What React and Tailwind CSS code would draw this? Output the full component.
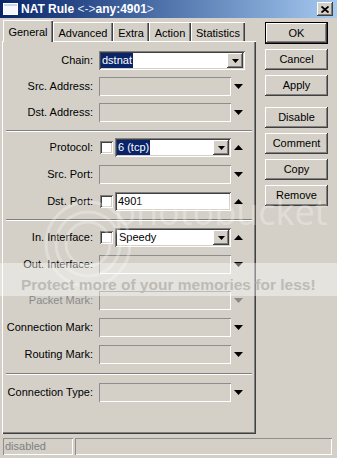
import React from "react";

const raised =
  "shadow-[inset_-1px_-1px_0_#404040,inset_1px_1px_0_#ffffff,inset_-2px_-2px_0_#808080]";
const sunken =
  "shadow-[inset_1px_1px_0_#808080,inset_-1px_-1px_0_#ffffff,inset_2px_2px_0_#404040,inset_-2px_-2px_0_#d4d0c8]";
const flat = "shadow-[inset_1px_1px_0_#8e8e8e,inset_-1px_-1px_0_#ffffff]";

const Down = ({ gray }) => (
  <svg width="9" height="5" className="ml-[3px] shrink-0">
    <polygon points="0,0 9,0 4.5,5" fill={gray ? "#8a8a8a" : "#000"} />
  </svg>
);

const Up = () => (
  <svg width="9" height="5" className="ml-[3px] shrink-0">
    <polygon points="4.5,0 9,5 0,5" fill="#000" />
  </svg>
);

const Check = () => (
  <div className={`ml-[1px] mr-[2px] w-[13px] h-[13px] bg-white shrink-0 ${sunken}`} />
);

const Empty = () => <div className={`w-[132px] h-full ${flat}`} />;

const Combo = ({ width, children }) => (
  <div className={`flex items-center h-full bg-white ${sunken} ${width}`}>
    <div className="flex-1 flex items-center pl-[2px] overflow-hidden">{children}</div>
    <div className={`w-[16px] self-stretch my-[2px] mr-[2px] bg-[#d4d0c8] flex items-center justify-center ${raised}`}>
      <svg width="7" height="4">
        <polygon points="0,0 7,0 3.5,4" fill="#000" />
      </svg>
    </div>
  </div>
);

const Row = ({ label, gray, className = "", children }) => (
  <div className={`flex items-center h-[19px] ${className}`}>
    <div className={`w-[91px] text-right whitespace-nowrap ${gray ? "text-[#8a8a8a]" : ""}`}>{label}</div>
    <div className="ml-[6px] flex items-center h-full w-[146px]">{children}</div>
  </div>
);

const Sep = ({ className }) => (
  <div className={`mx-[4px] h-[2px] border-t border-[#808080] border-b border-b-white ${className}`} />
);

const Btn = ({ label, def, className = "" }) => (
  <div
    className={`w-[63px] flex items-center justify-center ${def ? "h-[22px] border border-black" : "h-[21px]"} ${raised} ${className}`}
  >
    {label}
  </div>
);

const tabs = [
  ["Advanced", "w-[60px]"],
  ["Extra", "w-[36px]"],
  ["Action", "w-[42px]"],
  ["Statistics", "w-[54px]"],
];

export default function App() {
  return (
    <div className="relative w-[337px] h-[458px] overflow-hidden bg-[#d4d0c8] text-black text-[11px] font-['Liberation_Sans',Arial,sans-serif]">
      {/* title bar */}
      <div className="h-[18px] flex items-center bg-linear-to-r from-[#0a246a] to-[#a6caf0] pl-[3px] pr-[4px]">
        <svg width="15" height="12" className="shrink-0">
          <rect x="0.5" y="0.5" width="14" height="11" fill="#f4f7fc" stroke="#ffffff" />
          <rect x="1" y="1" width="13" height="2" fill="#c9d6ea" />
        </svg>
        <div className="ml-[3px] text-white text-[12px] font-bold leading-none whitespace-nowrap">
          NAT Rule <span className="font-normal text-[#dfe6f3]">&lt;-&gt;</span>any:4901<span className="font-normal text-[#dfe6f3]">&gt;</span>
        </div>
        <div className={`ml-auto w-[16px] h-[14px] bg-[#d4d0c8] flex items-center justify-center ${raised}`}>
          <svg width="8" height="7">
            <path d="M0.5 0.5 L7.5 6.5 M7.5 0.5 L0.5 6.5" stroke="#000" strokeWidth="1.8" />
          </svg>
        </div>
      </div>

      <div className="flex">
        <div className="ml-[2px] w-[254px]">
          {/* tabs */}
          <div className="flex items-end h-[23px]">
            <div className="relative z-10 ml-[1px] w-[50px] h-[22px] -mb-[1px] bg-[#d4d0c8] flex justify-center pt-[4px] shadow-[inset_1px_1px_0_#ffffff,inset_-1px_0_0_#404040,inset_-2px_0_0_#808080]">
              General
            </div>
            {tabs.map(([t, w]) => (
              <div
                key={t}
                className={`${w} h-[19px] flex justify-center pt-[3px] shadow-[inset_1px_1px_0_#ffffff,inset_-1px_0_0_#404040,inset_-2px_0_0_#808080]`}
              >
                {t}
              </div>
            ))}
          </div>

          {/* panel */}
          <div className="h-[393px] pt-[10px] shadow-[inset_1px_1px_0_#ffffff,inset_-1px_-1px_0_#404040,inset_-2px_-2px_0_#808080]">
            <div className="flex flex-col gap-[7px]">
              <Row label="Chain:">
                <Combo width="w-[146px]">
                  <span className="bg-[#0a246a] text-white px-[1px] leading-[15px]">dstnat</span>
                </Combo>
              </Row>
              <Row label="Src. Address:">
                <Empty />
                <Down />
              </Row>
              <Row label="Dst. Address:">
                <Empty />
                <Down />
              </Row>
            </div>
            <Sep className="mt-[8px]" />
            <div className="mt-[6px] flex flex-col gap-[8px]">
              <Row label="Protocol:">
                <Check />
                <Combo width="w-[116px]">
                  <span className="bg-[#0a246a] text-white px-[1px] leading-[15px]">6 (tcp)</span>
                </Combo>
                <Up />
              </Row>
              <Row label="Src. Port:">
                <Empty />
                <Down />
              </Row>
              <Row label="Dst. Port:">
                <Check />
                <div className={`w-[116px] h-full bg-white flex items-center pl-[3px] ${sunken}`}>4901</div>
                <Up />
              </Row>
            </div>
            <Sep className="mt-[8px]" />
            <div className="mt-[7px] flex flex-col gap-[8px]">
              <Row label="In. Interface:">
                <Check />
                <Combo width="w-[116px]">
                  <span className="pl-[2px]">Speedy</span>
                </Combo>
                <Up />
              </Row>
              <Row label="Out. Interface:">
                <Empty />
                <Down />
              </Row>
              <Row label="Packet Mark:" gray className="mt-[9px]">
                <Empty />
                <Down gray />
              </Row>
              <Row label="Connection Mark:">
                <Empty />
                <Down />
              </Row>
              <Row label="Routing Mark:">
                <Empty />
                <Down />
              </Row>
            </div>
            <Sep className="mt-[9px]" />
            <div className="mt-[8px]">
              <Row label="Connection Type:">
                <Empty />
                <Down />
              </Row>
            </div>
          </div>
        </div>

        {/* buttons */}
        <div className="ml-[9px] pt-[4px] flex flex-col">
          <Btn label="OK" def />
          <Btn label="Cancel" className="mt-[5px]" />
          <Btn label="Apply" className="mt-[5px]" />
          <Btn label="Disable" className="mt-[11px]" />
          <Btn label="Comment" className="mt-[5px]" />
          <Btn label="Copy" className="mt-[5px]" />
          <Btn label="Remove" className="mt-[5px]" />
        </div>
      </div>

      {/* status bar */}
      <div className="mt-[4px] px-[3px] flex gap-[2px]">
        <div className={`w-[70px] h-[17px] flex items-center pl-[2px] text-[#808080] ${flat}`}>disabled</div>
        <div className={`w-[257px] h-[17px] ${flat}`} />
      </div>

      {/* photobucket watermark over the screenshot */}
      <svg width="337" height="458" className="absolute left-0 top-0 pointer-events-none">
        <g fill="none" stroke="#ffffff" strokeOpacity="0.28" strokeWidth="3">
          <circle cx="88" cy="244" r="42" />
          <circle cx="88" cy="244" r="32" />
          <circle cx="88" cy="244" r="22" />
        </g>
      </svg>
      <div className="absolute left-[114px] top-[194px] text-[36px] leading-none text-white/30 font-['Open_Sans',sans-serif] pointer-events-none">
        photobucket
      </div>
      <div className="absolute left-0 top-[263px] w-[337px] h-[33px] bg-white/40 pointer-events-none">
        <div className="pl-[21px] pt-[13px] leading-[18px] text-[15.5px] font-bold text-[#bdbbb6] whitespace-nowrap">
          Protect more of your memories for less!
        </div>
      </div>
    </div>
  );
}
